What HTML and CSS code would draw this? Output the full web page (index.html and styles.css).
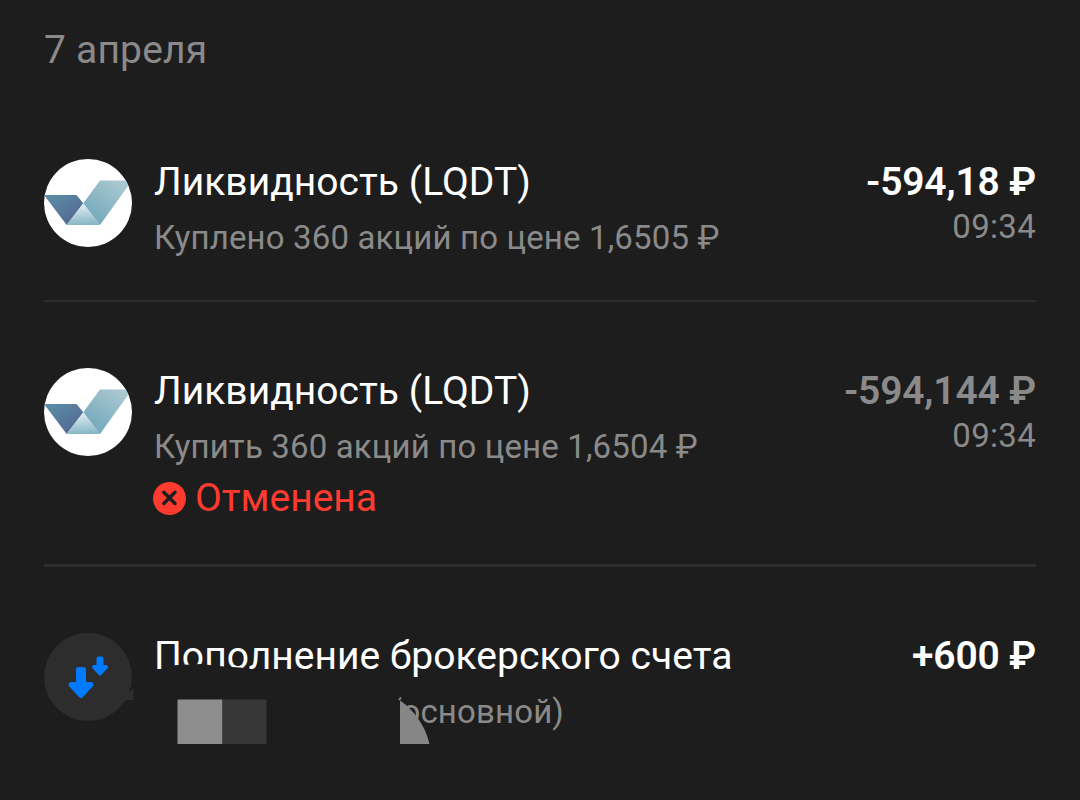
FILE: index.html
```
<!DOCTYPE html>
<html lang="ru">
  <head>
    <meta charset="utf-8">
    <meta name="viewport" content="width=device-width, initial-scale=1.0">
    <title>История операций</title>
    <link rel="stylesheet" href="styles.css">
  </head>
  <body>
    <svg class="defs" width="0" height="0">
      <defs>
        <linearGradient id="left" x1="0" y1="0" x2="0.8" y2="1">
          <stop offset="0" stop-color="#5b91a9" />
          <stop offset="1" stop-color="#53648f" />
        </linearGradient>
        <linearGradient id="right" x1="1" y1="0" x2="0.2" y2="1">
          <stop offset="0" stop-color="#b4cdd6" />
          <stop offset="1" stop-color="#6ea7b8" />
        </linearGradient>
        <linearGradient id="bottom" x1="0.4" y1="0" x2="0.5" y2="1">
          <stop offset="0" stop-color="#e6f0f3" />
          <stop offset="1" stop-color="#86b6c5" />
        </linearGradient>
        <clipPath id="round"><circle cx="44" cy="44" r="44" /></clipPath>
        <symbol id="lqdt" viewBox="0 0 88 88">
          <circle cx="44" cy="44" r="44" fill="#fff" />
          <g clip-path="url(#round)">
            <path d="M0 36H32.500L39.300 44.300L22.700 66Z" fill="url(#left)" />
            <path d="M39.300 44.300L56 66H22.700Z" fill="url(#bottom)" />
            <path d="M39.300 44.300L56 21.500H88L56 66Z" fill="url(#right)" />
          </g>
        </symbol>
      </defs>
    </svg>

    <h1 class="date">7 апреля</h1>

    <div class="operation bought">
      <svg class="logo"><use href="#lqdt" /></svg>
      <div class="info">
        <div class="title">Ликвидность (LQDT)</div>
        <div class="subtitle">Куплено 360 акций по цене 1,6505 ₽</div>
      </div>
      <div class="total">
        <div class="amount">-594,18 ₽</div>
        <div class="time">09:34</div>
      </div>
    </div>

    <div class="operation cancelled">
      <svg class="logo"><use href="#lqdt" /></svg>
      <div class="info">
        <div class="title">Ликвидность (LQDT)</div>
        <div class="subtitle">Купить 360 акций по цене 1,6504 ₽</div>
        <div class="status">
          <svg class="status-icon" viewBox="0 0 33 33">
            <circle cx="16.500" cy="16.500" r="16.500" fill="#ff3b30" />
            <path d="M10.800 10.300L22 21.500M22 10.300L10.800 21.500" stroke="#1d1d1d" stroke-width="3.500" stroke-linecap="round" />
          </svg>
          <span>Отменена</span>
        </div>
      </div>
      <div class="total">
        <div class="amount muted">-594,144 ₽</div>
        <div class="time">09:34</div>
      </div>
    </div>

    <div class="operation deposit">
      <svg class="logo" viewBox="0 0 88 88">
        <circle cx="44" cy="44" r="44" fill="#2d2d2d" />
        <path d="M86 58L89.500 55V67H77Z" fill="#2d2d2d" />
        <g fill="#007aff" stroke="#007aff" stroke-linejoin="round">
          <path d="M34.500 36.500H39.500V51.500H47L37 62.500L27 51.500H34.500Z" stroke-width="5" />
          <path d="M54.500 25.500H57.500V34H62L56 40.500L50 34H54.500Z" stroke-width="4" />
        </g>
      </svg>
      <div class="info">
        <div class="title">Пополнение брокерского счета</div>
        <div class="subtitle account">(основной)</div>
        <!-- hidden account number -->
        <svg class="cover" viewBox="0 0 300 120">
          <path d="M14 32.500L47 31L64 33L86 34.500L108 38V50H14Z" fill="#1d1d1d" />
          <path d="M230 60H249V112H230Z" fill="#1d1d1d" />
          <rect x="23.500" y="66.500" width="45" height="44.500" fill="#8e8e8e" />
          <rect x="68.500" y="66.500" width="44" height="44.500" fill="#373737" />
          <path d="M246 67.500C260 77 271 92 275.500 111H246Z" fill="#868686" />
          <path d="M245 67L247 64.500" stroke="#868686" stroke-width="2" />
        </svg>
      </div>
      <div class="total">
        <div class="amount">+600 ₽</div>
      </div>
    </div>
  </body>
</html>
```

FILE: styles.css
```
body {
  margin: 0;
  padding: 26px 44px 0;
  height: 774px;
  overflow: hidden;
  background-color: #1d1d1d;
  color: #fff;
  font-family: Roboto, "Liberation Sans", sans-serif;
}

.defs {
  position: absolute;
}

.date {
  margin: 0;
  color: #8a8a8a;
  font-size: 39px;
  font-weight: 400;
  line-height: 48px;
  letter-spacing: 0.2px;
}

.operation {
  display: flex;
  align-items: flex-start;
  box-sizing: border-box;
}

.bought {
  height: 228px;
  padding-top: 85px;
  border-bottom: 2px solid #2d2d2d;
}

.cancelled {
  height: 265px;
  padding-top: 66px;
  border-bottom: 3px solid #2d2d2d;
}

.deposit {
  padding-top: 66px;
}

.logo {
  width: 88px;
  height: 88px;
  flex: none;
  overflow: visible;
}

.info {
  position: relative;
  flex: 1;
  margin-left: 22px;
  white-space: nowrap;
}

.title {
  font-size: 39px;
  line-height: 46px;
  letter-spacing: 0.04px;
}

.subtitle {
  margin-top: 13px;
  color: #8a8a8a;
  font-size: 33px;
  line-height: 40px;
  letter-spacing: 0.15px;
}

.account {
  padding-left: 236px;
}

.cover {
  position: absolute;
  left: 0;
  top: 0;
  width: 300px;
  height: 120px;
}

.status {
  display: flex;
  align-items: center;
  margin: 7px 0 0 -1px;
  color: #ff3b30;
  font-size: 39px;
  line-height: 48px;
}

.status-icon {
  width: 33px;
  height: 33px;
  margin-right: 9px;
}

.total {
  text-align: right;
  white-space: nowrap;
}

.amount {
  font-size: 39px;
  font-weight: 600;
  line-height: 46px;
  letter-spacing: -0.2px;
}

.muted {
  color: #8a8a8a;
}

.time {
  margin-top: 2px;
  color: #8a8a8a;
  font-size: 33px;
  line-height: 40px;
  letter-spacing: 0.3px;
}
```
